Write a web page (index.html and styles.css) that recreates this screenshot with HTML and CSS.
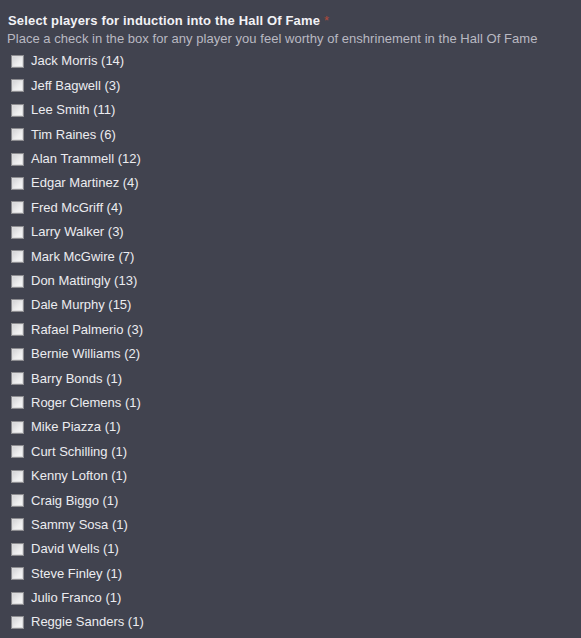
FILE: index.html
```html
<!DOCTYPE html>
<html>
<head>
<meta charset="utf-8">
<link rel="stylesheet" href="styles.css">
</head>
<body>
<div class="field">
  <div class="label">Select players for induction into the Hall Of Fame <span class="req">*</span></div>
  <div class="hint">Place a check in the box for any player you feel worthy of enshrinement in the Hall Of Fame</div>
  <ul class="options">
    <li><span class="box"></span>Jack Morris (14)</li>
    <li><span class="box"></span>Jeff Bagwell (3)</li>
    <li><span class="box"></span>Lee Smith (11)</li>
    <li><span class="box"></span>Tim Raines (6)</li>
    <li><span class="box"></span>Alan Trammell (12)</li>
    <li><span class="box"></span>Edgar Martinez (4)</li>
    <li><span class="box"></span>Fred McGriff (4)</li>
    <li><span class="box"></span>Larry Walker (3)</li>
    <li><span class="box"></span>Mark McGwire (7)</li>
    <li><span class="box"></span>Don Mattingly (13)</li>
    <li><span class="box"></span>Dale Murphy (15)</li>
    <li><span class="box"></span>Rafael Palmerio (3)</li>
    <li><span class="box"></span>Bernie Williams (2)</li>
    <li><span class="box"></span>Barry Bonds (1)</li>
    <li><span class="box"></span>Roger Clemens (1)</li>
    <li><span class="box"></span>Mike Piazza (1)</li>
    <li><span class="box"></span>Curt Schilling (1)</li>
    <li><span class="box"></span>Kenny Lofton (1)</li>
    <li><span class="box"></span>Craig Biggo (1)</li>
    <li><span class="box"></span>Sammy Sosa (1)</li>
    <li><span class="box"></span>David Wells (1)</li>
    <li><span class="box"></span>Steve Finley (1)</li>
    <li><span class="box"></span>Julio Franco (1)</li>
    <li><span class="box"></span>Reggie Sanders (1)</li>
  </ul>
</div>
</body>
</html>
```
FILE: styles.css
```css
html, body {
  margin: 0;
  padding: 0;
  background: #41434f;
  height: 100%;
}
body {
  font-family: "Liberation Sans", Arial, sans-serif;
  font-size: 13px;
  color: #ececf0;
}
.field {
  padding: 13px 0 0 8px;
}
.label {
  font-weight: bold;
  line-height: 16px;
  letter-spacing: 0.16px;
  color: #f2f2f6;
}
.req {
  color: #b04a3a;
  font-weight: normal;
}
.hint {
  margin-top: 1px;
  line-height: 17px;
  letter-spacing: 0.04px;
  color: #b9b9c2;
  margin-left: -1px;
}
.options {
  list-style: none;
  margin: 2.3px 0 0 0;
  padding: 0;
}
.options li {
  display: flex;
  align-items: center;
  height: 24.4px;
  line-height: 16px;
  color: #ececf0;
}
.box {
  box-sizing: border-box;
  width: 13px;
  height: 13px;
  margin: 0 7px 0 3px;
  border: 1px solid #8c8c90;
  background: linear-gradient(135deg, #cfcfd2 0%, #eeeeef 60%, #f8f8f8 100%);
  box-shadow: inset 0 0 0 1px #dcdcde;
}
```
